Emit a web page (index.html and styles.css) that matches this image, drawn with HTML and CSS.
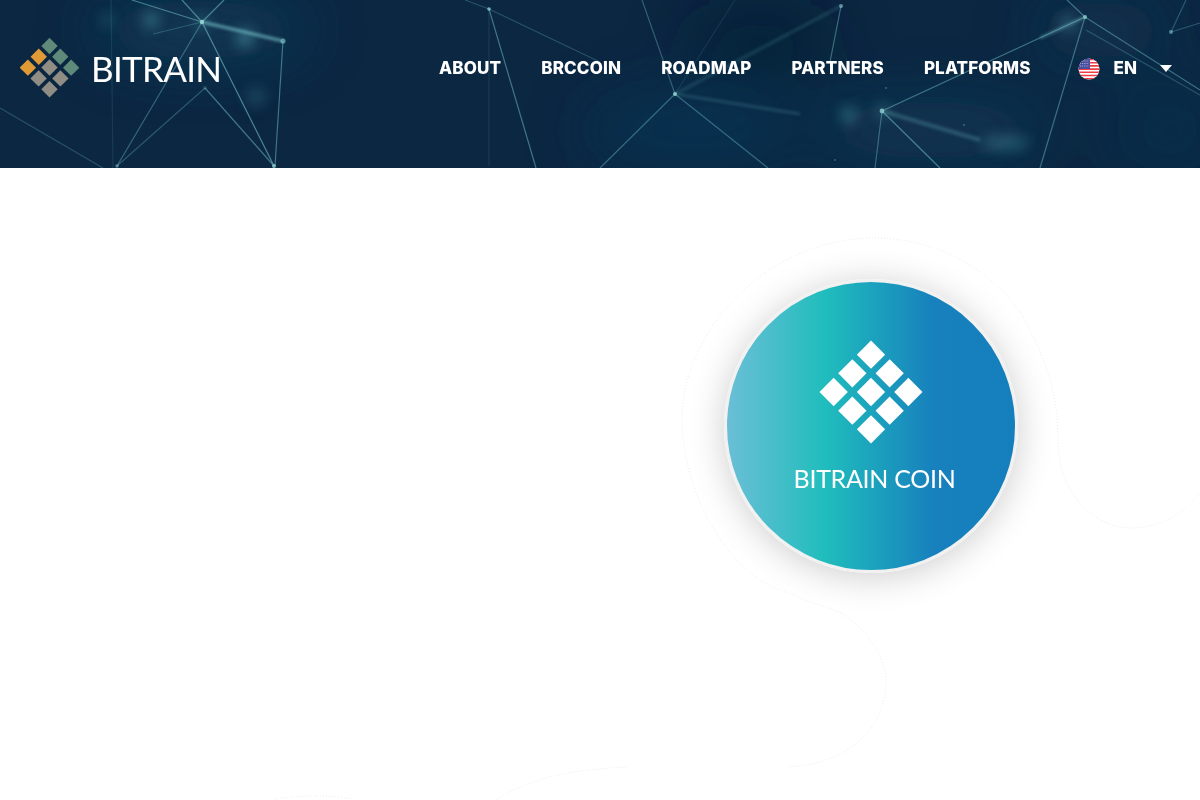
FILE: index.html
```html
<!DOCTYPE html>
<html lang="en">
<head>
<meta charset="utf-8">
<title>Bitrain</title>
<link rel="stylesheet" href="styles.css">
</head>
<body>
<header class="header">
  <svg class="network" viewBox="0 0 1200 168" preserveAspectRatio="none" aria-hidden="true">
    <defs>
      <filter id="blur8" x="-100%" y="-100%" width="300%" height="300%"><feGaussianBlur stdDeviation="7"/></filter>
      <filter id="blur20" x="-20%" y="-100%" width="140%" height="300%"><feGaussianBlur stdDeviation="30"/></filter>
      <filter id="blur2" x="-20%" y="-50%" width="140%" height="200%"><feGaussianBlur stdDeviation="1.6"/></filter>
      <filter id="blur05" x="-5%" y="-5%" width="110%" height="110%"><feGaussianBlur stdDeviation="0.45"/></filter>
    </defs>
    <g filter="url(#blur20)">
      <ellipse cx="200" cy="30" rx="110" ry="30" fill="#1b5a78" opacity=".4"/>
      <ellipse cx="690" cy="130" rx="110" ry="40" fill="#114a6c" opacity=".3"/>
      <ellipse cx="930" cy="130" rx="120" ry="30" fill="#124e6e" opacity=".4"/>
      <ellipse cx="1100" cy="30" rx="70" ry="30" fill="#134a68" opacity=".35"/>
      <ellipse cx="1170" cy="130" rx="60" ry="40" fill="#0f3a5c" opacity=".35"/>
      <ellipse cx="760" cy="40" rx="70" ry="40" fill="#0a1f33" opacity=".6"/>
    </g>
    <g filter="url(#blur8)" fill="#4f9fae">
      <circle cx="151" cy="20" r="8" opacity=".55"/>
      <circle cx="107" cy="20" r="5" opacity=".45"/>
      <circle cx="245" cy="38" r="9" opacity=".6"/>
      <circle cx="256" cy="97" r="10" opacity=".25"/>
      <circle cx="849" cy="115" r="8" opacity=".5"/>
      <ellipse cx="1005" cy="143" rx="24" ry="6" opacity=".45"/>
      <circle cx="1068" cy="24" r="8" opacity=".45"/>
      <circle cx="202" cy="22" r="6" opacity=".5"/>
      <circle cx="882" cy="111" r="6" opacity=".5"/>
    </g>
    <g filter="url(#blur2)" stroke="#6fb9c0" fill="none">
      <path d="M202 22 283 41" stroke-width="3" opacity=".75"/>
      <path d="M882 111 980 140" stroke-width="4" opacity=".28"/>
      <path d="M675 94 841 6" stroke-width="3" opacity=".2"/>
      <path d="M1085 17 1040 38" stroke-width="3" opacity=".45"/>
      <path d="M675 94 800 114" stroke-width="2.5" opacity=".25"/>
    </g>
    <g filter="url(#blur05)" stroke="#6db5bf" fill="none" stroke-width="1.2">
      <path d="M202 22 182 0M202 22 224 0M202 22 132 0" opacity=".6"/>
      <path d="M202 22 153 34" opacity=".3"/>
      <path d="M202 22 274 166" opacity=".65"/>
      <path d="M202 22 117 166" opacity=".45"/>
      <path d="M205 88 117 166" opacity=".35"/>
      <path d="M205 88 274 166" opacity=".55"/>
      <path d="M283 41 275 166" opacity=".55"/>
      <path d="M489 9 536 168" opacity=".55"/>
      <path d="M489 9 465 0M489 9 600 62" opacity=".3"/>
      <path d="M489 9 489 166" opacity=".15"/>
      <path d="M0 108 103 168" opacity=".3"/>
      <path d="M111 0 113 168" opacity=".14"/>
      <path d="M675 94 600 168" opacity=".45"/>
      <path d="M675 94 642 0" opacity=".4"/>
      <path d="M675 94 735 0" opacity=".14"/>
      <path d="M675 94 768 168" opacity=".45"/>
      <path d="M841 6 830 62" opacity=".5"/>
      <path d="M882 111 1085 17" opacity=".55"/>
      <path d="M882 111 875 168" opacity=".45"/>
      <path d="M882 111 940 168" opacity=".6"/>
      <path d="M1085 17 1040 168" opacity=".5"/>
      <path d="M1085 17 1067 0" opacity=".5"/>
      <path d="M1085 17 1200 90" opacity=".5"/>
      <path d="M1086 30 1200 95" opacity=".3"/>
      <path d="M1171 32 1200 23M1171 32 1186 0" opacity=".35"/>
    </g>
    <g fill="#8fd0d0">
      <circle cx="202" cy="22" r="2.2"/>
      <circle cx="283" cy="41" r="2.6" opacity=".55"/>
      <circle cx="489" cy="9" r="1.8" opacity=".8"/>
      <circle cx="274" cy="166" r="2" opacity=".8"/>
      <circle cx="117" cy="166" r="1.8" opacity=".5"/>
      <circle cx="205" cy="88" r="2" opacity=".2"/>
      <circle cx="675" cy="94" r="2" opacity=".9"/>
      <circle cx="841" cy="6" r="2" opacity=".6"/>
      <circle cx="882" cy="111" r="2.4" opacity=".8"/>
      <circle cx="1085" cy="17" r="2" opacity=".8"/>
      <circle cx="1171" cy="32" r="2" opacity=".55"/>
      <circle cx="886" cy="88" r=".9" opacity=".4"/>
      <circle cx="964" cy="125" r=".9" opacity=".4"/>
      <circle cx="835" cy="160" r=".9" opacity=".4"/>
    </g>
  </svg>

  <a class="brand" href="#">
    <svg class="brand-mark" viewBox="0 0 60 60" aria-hidden="true">
      <g transform="translate(29.5 29.5) rotate(45)">
        <rect class="tile-green" x="-21" y="-21" width="11.6" height="11.6"/>
        <rect class="tile-green" x="-5.8" y="-21" width="11.6" height="11.6"/>
        <rect class="tile-green" x="9.6" y="-21" width="11.6" height="11.6"/>
        <rect class="tile-orange" x="-21" y="-5.8" width="11.6" height="11.6"/>
        <rect class="tile-gray" x="-5.8" y="-5.8" width="11.6" height="11.6"/>
        <rect class="tile-gray" x="9.6" y="-5.8" width="11.6" height="11.6"/>
        <rect class="tile-orange" x="-21" y="9.6" width="11.6" height="11.6"/>
        <rect class="tile-gray" x="-5.8" y="9.6" width="11.6" height="11.6"/>
        <rect class="tile-gray" x="9.6" y="9.6" width="11.6" height="11.6"/>
      </g>
    </svg>
    <span class="brand-name">BITRAIN</span>
  </a>

  <nav class="nav">
    <a href="#">ABOUT</a>
    <a href="#">BRCCOIN</a>
    <a href="#">ROADMAP</a>
    <a href="#">PARTNERS</a>
    <a href="#">PLATFORMS</a>
  </nav>

  <div class="lang">
    <svg class="flag" viewBox="0 0 22 22" aria-hidden="true">
      <defs><clipPath id="flagClip"><circle cx="11" cy="11" r="10.5"/></clipPath></defs>
      <g clip-path="url(#flagClip)">
        <rect width="22" height="22" fill="#fff"/>
        <path d="M0 1.5h22M0 4.7h22M0 7.9h22M0 11.1h22M0 14.3h22M0 17.5h22M0 20.7h22" stroke="#ef3b46" stroke-width="1.6"/>
        <rect width="12" height="11" fill="#4a4f9e"/>
        <path d="M2 3h9M2 5.5h9M2 8h9" stroke="#c9cbe8" stroke-width=".8" stroke-dasharray="1 1.2"/>
      </g>
    </svg>
    <span class="lang-code">EN</span>
    <span class="caret"></span>
  </div>
</header>

<main class="hero">
  <svg class="curves" viewBox="0 0 1200 632" aria-hidden="true">
    <path d="M1020 144C1042 180 1055 220 1057 249 1058 268 1058 280 1060 295 1068 330 1095 360 1132 360 1160 360 1185 345 1200 325"/>
    <path d="M1020 144C985 95 930 70 874 70 770 70 682 160 682 252 682 320 725 402 780 422 800 430 815 436 834 442 865 455 886 490 886 512 886 560 850 595 789 599"/>
    <path d="M626 599C570 602 530 610 496 632"/>
    <path d="M275 631C300 627 330 627 353 631"/>
  </svg>
  <div class="coin">
    <svg class="coin-mark" viewBox="0 0 104 104" aria-hidden="true">
      <g transform="translate(52 52) rotate(45)">
        <rect x="-36.4" y="-36.4" width="20" height="20"/>
        <rect x="-10" y="-36.4" width="20" height="20"/>
        <rect x="16.4" y="-36.4" width="20" height="20"/>
        <rect x="-36.4" y="-10" width="20" height="20"/>
        <rect x="-10" y="-10" width="20" height="20"/>
        <rect x="16.4" y="-10" width="20" height="20"/>
        <rect x="-36.4" y="16.4" width="20" height="20"/>
        <rect x="-10" y="16.4" width="20" height="20"/>
        <rect x="16.4" y="16.4" width="20" height="20"/>
      </g>
    </svg>
    <span class="coin-name">BITRAIN COIN</span>
  </div>
</main>
</body>
</html>
```

FILE: styles.css
```css
* { box-sizing: border-box; }

html, body {
  margin: 0;
  height: 100%;
  background: #fff;
  overflow: hidden;
}

body {
  font-family: "Inter", "Liberation Sans", sans-serif;
}

.header {
  position: relative;
  display: flex;
  align-items: center;
  height: 168px;
  padding: 0 28px 32px 20px;
  background: #0b2742;
  overflow: hidden;
}

.network {
  position: absolute;
  inset: 0;
  width: 100%;
  height: 100%;
}

.brand {
  position: relative;
  display: flex;
  align-items: center;
  gap: 12px;
  color: #fff;
  text-decoration: none;
}

.brand-mark {
  width: 60px;
  height: 60px;
  flex: none;
}

.tile-green { fill: #5f8a7a; }
.tile-orange { fill: #e09a35; }
.tile-gray { fill: #908d84; }

.brand-name {
  margin-left: -1px;
  font-family: "Lato", sans-serif;
  font-weight: 400;
  font-size: 35px;
  line-height: 40px;
  letter-spacing: -.7px;
}

.nav {
  position: relative;
  display: flex;
  gap: 40px;
  margin-left: auto;
}

.nav a {
  color: #fff;
  text-decoration: none;
  font-weight: 800;
  font-size: 17px;
  line-height: 24px;
  letter-spacing: .15px;
}

.lang {
  position: relative;
  display: flex;
  align-items: center;
  margin-left: 47px;
  color: #fff;
}

.flag {
  width: 22px;
  height: 22px;
  margin-top: 2px;
  flex: none;
}

.lang-code {
  margin-left: 14px;
  font-weight: 800;
  font-size: 17px;
  line-height: 24px;
}

.caret {
  width: 0;
  height: 0;
  margin-left: 23px;
  border-left: 6px solid transparent;
  border-right: 6px solid transparent;
  border-top: 7px solid #fff;
}

.hero {
  position: relative;
  height: 632px;
  padding: 111px 0 0 724px;
}

.curves {
  position: absolute;
  inset: 0;
  width: 100%;
  height: 100%;
}

.curves path {
  fill: none;
  stroke: #ececec;
  stroke-width: 1;
  stroke-dasharray: 1 2;
}

.coin {
  position: relative;
  display: flex;
  flex-direction: column;
  align-items: center;
  width: 294px;
  height: 294px;
  padding-top: 58px;
  border: 3px solid #f1f1f1;
  border-radius: 50%;
  background: linear-gradient(90deg, #6bbfd6 0%, #20bdbd 34%, #1780bd 72%, #157fbd 100%);
  box-shadow: 0 4px 36px rgba(0, 0, 0, .2);
}

.coin-mark {
  width: 104px;
  height: 104px;
  flex: none;
  fill: #fff;
}

.coin-name {
  margin: 19px 0 0 7px;
  color: #fff;
  font-family: "Lato", sans-serif;
  font-size: 25px;
  line-height: 30px;
  letter-spacing: -.3px;
  white-space: nowrap;
}
```
